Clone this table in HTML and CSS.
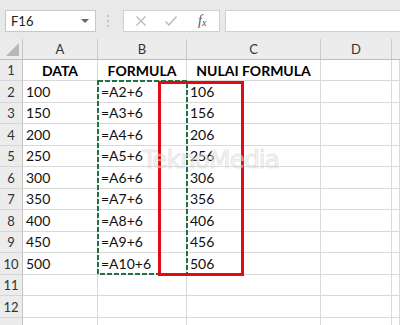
FILE: index.html
```html
<!DOCTYPE html>
<html>
<head>
<meta charset="utf-8">
<link rel="stylesheet" href="styles.css">
</head>
<body>
<div class="app">
  <div class="fbar">
    <div class="namebox"><span class="ref">F16</span><span class="caret"></span></div>
    <svg class="sep" width="8" height="14" viewBox="0 0 8 14"><circle cx="4" cy="2" r="1" fill="#b5b5b5"/><circle cx="4" cy="7" r="1" fill="#b5b5b5"/><circle cx="4" cy="12" r="1" fill="#b5b5b5"/></svg>
    <div class="fxbox">
      <svg class="ico" width="12" height="12" viewBox="0 0 12 12"><path d="M1.5 1.5 L10.5 10.5 M10.5 1.5 L1.5 10.5" stroke="#b9b9b9" stroke-width="1.3" fill="none"/></svg>
      <svg class="ico" width="14" height="12" viewBox="0 0 14 12"><path d="M1.5 6.5 L5 10 L12.5 1.5" stroke="#b9b9b9" stroke-width="1.4" fill="none"/></svg>
      <span class="fx"><i>f</i><sub>x</sub></span>
    </div>
    <div class="finput"></div>
  </div>
  <div class="sheet">
    <div class="corner"><span class="tri"></span></div>
    <div class="ch">A</div><div class="ch">B</div><div class="ch">C</div><div class="ch">D</div><div class="ch last"></div>

    <div class="rh">1</div><div class="c hd">DATA</div><div class="c hd">FORMULA</div><div class="c hd">NULAI FORMULA</div><div class="c"></div><div class="c"></div>
    <div class="rh">2</div><div class="c">100</div><div class="c">=A2+6</div><div class="c">106</div><div class="c"></div><div class="c"></div>
    <div class="rh">3</div><div class="c">150</div><div class="c">=A3+6</div><div class="c">156</div><div class="c"></div><div class="c"></div>
    <div class="rh">4</div><div class="c">200</div><div class="c">=A4+6</div><div class="c">206</div><div class="c"></div><div class="c"></div>
    <div class="rh">5</div><div class="c">250</div><div class="c">=A5+6</div><div class="c">256</div><div class="c"></div><div class="c"></div>
    <div class="rh">6</div><div class="c">300</div><div class="c">=A6+6</div><div class="c">306</div><div class="c"></div><div class="c"></div>
    <div class="rh">7</div><div class="c">350</div><div class="c">=A7+6</div><div class="c">356</div><div class="c"></div><div class="c"></div>
    <div class="rh">8</div><div class="c">400</div><div class="c">=A8+6</div><div class="c">406</div><div class="c"></div><div class="c"></div>
    <div class="rh">9</div><div class="c">450</div><div class="c">=A9+6</div><div class="c">456</div><div class="c"></div><div class="c"></div>
    <div class="rh">10</div><div class="c">500</div><div class="c">=A10+6</div><div class="c">506</div><div class="c"></div><div class="c"></div>
    <div class="rh">11</div><div class="c"></div><div class="c"></div><div class="c"></div><div class="c"></div><div class="c"></div>
    <div class="rh">12</div><div class="c"></div><div class="c"></div><div class="c"></div><div class="c"></div><div class="c"></div>
    <div class="rh"></div><div class="c"></div><div class="c"></div><div class="c"></div><div class="c"></div><div class="c"></div>

    <svg class="copy" width="92" height="196" viewBox="0 0 92 196"><rect x="1" y="1" width="89" height="193" fill="none" stroke="#1f7244" stroke-width="2" stroke-dasharray="5 2"/></svg>
    <div class="redbox"></div>
    <div class="wm">TeknoMedia</div>
  </div>
</div>
</body>
</html>
```
FILE: styles.css
```css
* { box-sizing: border-box; }
html, body { margin: 0; padding: 0; }
body {
  width: 400px;
  height: 325px;
  overflow: hidden;
  background: #e9e9e9;
  font-family: Lato, "Open Sans", sans-serif;
}
.app { width: 400px; }
.fbar {
  height: 39px;
  display: flex;
  align-items: flex-start;
  padding-top: 10px;
  background: #e9e9e9;
}
.namebox {
  margin-left: 5px;
  width: 91px;
  height: 22px;
  background: #fff;
  border: 1px solid #c8c8c8;
  display: flex;
  align-items: center;
  justify-content: space-between;
  padding: 0 6px 0 5px;
}
.ref { font-size: 13px; color: #222; }
.caret {
  width: 0; height: 0;
  border-left: 4px solid transparent;
  border-right: 4px solid transparent;
  border-top: 4px solid #666;
}
.sep { margin-left: 8px; margin-top: 4px; }
.fxbox {
  margin-left: 11px;
  width: 97px;
  height: 22px;
  background: #fff;
  border: 1px solid #d0d0d0;
  display: flex;
  align-items: center;
  padding-left: 11px;
  gap: 17px;
}
.fx {
  font-family: "Liberation Serif", serif;
  color: #555;
  font-size: 14px;
  margin-left: 3px;
}
.fx sub { font-size: 10px; font-style: italic; vertical-align: -1px; }
.finput {
  margin-left: 5px;
  flex: 1;
  height: 22px;
  background: #fff;
  border: 1px solid #d0d0d0;
  border-right: none;
}
.sheet {
  position: relative;
  display: grid;
  grid-template-columns: 23px 75px 89px 134px 71px 1fr;
  grid-template-rows: 21px 21px 22px 21px 22px 21px 22px 21px 22px 21px 22px 21px 22px 21px;
  background: #fff;
}
.corner {
  background: #ececec;
  border-right: 1px solid #c4c4c4;
  border-bottom: 1px solid #bcbcbc;
  position: relative;
}
.tri {
  position: absolute;
  right: 3px;
  bottom: 3px;
  width: 0; height: 0;
  border-left: 13px solid transparent;
  border-bottom: 13px solid #b8b8b8;
}
.ch {
  background: #ececec;
  border-right: 1px solid #cbcbcb;
  border-bottom: 1px solid #bcbcbc;
  display: flex;
  align-items: center;
  justify-content: center;
  font-size: 13px;
  color: #333;
}
.ch.last { border-right: none; }
.rh {
  background: #ececec;
  border-right: 1px solid #c4c4c4;
  border-bottom: 1px solid #d6d6d6;
  display: flex;
  align-items: center;
  justify-content: center;
  font-size: 13px;
  color: #333;
}
.c {
  border-right: 1px solid #d9d9d9;
  border-bottom: 1px solid #d9d9d9;
  display: flex;
  align-items: flex-end;
  padding: 0 0 2px 3px;
  font-size: 14px;
  color: #111;
  white-space: nowrap;
}
.c.hd {
  justify-content: center;
  align-items: center;
  padding: 0;
  font-weight: 700;
  font-size: 14px;
  color: #000;
}
.copy {
  position: absolute;
  left: 97px;
  top: 41px;
}
.redbox {
  position: absolute;
  left: 158px;
  top: 42px;
  width: 86px;
  height: 195px;
  border: 3px solid #e30b13;
}
.wm {
  position: absolute;
  left: 142px;
  top: 106px;
  font-family: "DejaVu Sans", sans-serif;
  font-size: 25px;
  letter-spacing: -1px;
  color: rgba(238, 238, 238, 0.5);
  -webkit-text-stroke: 1px rgba(180, 180, 180, 0.3);
  pointer-events: none;
}
```
